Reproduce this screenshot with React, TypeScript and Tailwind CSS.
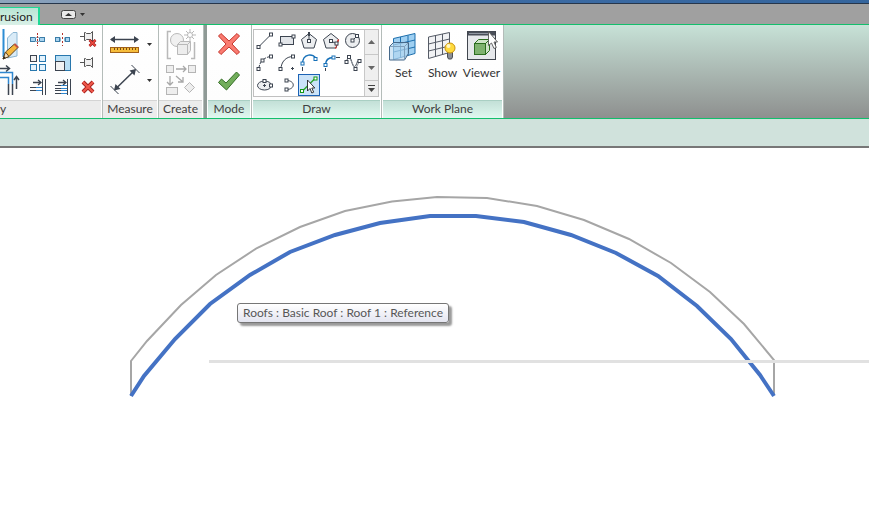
import React from 'react';

interface PanelProps {
  title: string;
  active?: boolean;
  align?: string;
  className: string;
  children: React.ReactNode;
}

const INK = '#3c4450';
const BLUE = '#2f86cf';

const Panel: React.FC<PanelProps> = ({ title, active = false, align = 'text-center', className, children }) => (
  <section className={`flex shrink-0 flex-col border-r border-[#b4bcb9] bg-white ${className}`}>
    <div className="flex h-[75px] bg-linear-to-b from-white to-[#fdfdfd]">{children}</div>
    <h2
      className={`mr-px h-[18px] overflow-hidden whitespace-nowrap border-t text-[12px] leading-4 text-[#404040] ${align} ${
        active
          ? 'ml-px border-[#a9cfc3] bg-linear-to-b from-[#c3e0d7] to-[#e0f8f0]'
          : 'border-[#d4d4d4] bg-[#ececec]'
      }`}
    >
      {title}
    </h2>
  </section>
);

interface ToolProps {
  label: string;
  className?: string;
  children: React.ReactNode;
}

const Tool: React.FC<ToolProps> = ({ label, className = '', children }) => (
  <button type="button" aria-label={label} className={`flex shrink-0 items-center justify-center ${className}`}>
    {children}
  </button>
);

// Small square grip used on the sketch icons
const Node: React.FC<{ x: number; y: number; color?: string }> = ({ x, y, color = INK }) => (
  <rect x={x - 1.5} y={y - 1.5} width="3" height="3" fill="#fff" stroke={color} />
);

const modifyTools = [
  {
    label: 'Split Element',
    icon: (
      <>
        <rect x="5.5" y="9.5" width="5" height="4" fill="#a8d3ef" stroke="#3b7da8" />
        <rect x="14.5" y="9.5" width="5" height="4" fill="#a8d3ef" stroke="#3b7da8" />
        <path d="M10 9.5h5M10 13.5h5" stroke="#8fb4cb" />
        <path d="M12.500 5v13" stroke="#b5342c" strokeDasharray="2 1" />
      </>
    ),
  },
  {
    label: 'Split with Gap',
    icon: (
      <>
        <rect x="5.5" y="9.5" width="4" height="4" fill="#a8d3ef" stroke="#3b7da8" />
        <rect x="15.5" y="9.5" width="4" height="4" fill="#a8d3ef" stroke="#3b7da8" />
        <path d="M10.5 9.5v4M14.500 9.5v4" stroke="#8fb4cb" />
        <path d="M12.500 5v13" stroke="#b5342c" strokeDasharray="2 2" />
      </>
    ),
  },
  {
    label: 'Unpin',
    icon: (
      <>
        <path d="M5 8.5h4" stroke="#555" />
        <path d="M9.500 4.500h1l1 1h4l2-2v10l-2-2h-4l-1 1h-1z" fill="#f0f0f0" stroke="#555" />
        <path d="m14.500 12 6 6M20.500 12l-6 6" stroke="#a11818" strokeWidth="2.600" />
        <path d="m14.500 12 6 6M20.500 12l-6 6" stroke="#ef4d42" strokeWidth="1.200" />
      </>
    ),
  },
  {
    label: 'Array',
    icon: (
      <>
        <rect x="5.5" y="3.5" width="6" height="6" fill="#f2f2f2" stroke={INK} />
        <g fill="#e4f3fd" stroke="#2877ad">
          <rect x="14.5" y="3.5" width="6" height="6" />
          <rect x="5.5" y="12.5" width="6" height="6" />
          <rect x="14.5" y="12.5" width="6" height="6" />
        </g>
      </>
    ),
  },
  {
    label: 'Scale',
    icon: (
      <>
        <rect x="5.500" y="3.500" width="15" height="15" fill="#b9dff5" stroke="#2877ad" />
        <rect x="5.500" y="9.500" width="9" height="9" fill="#f2f2f2" stroke={INK} />
      </>
    ),
  },
  {
    label: 'Pin',
    icon: (
      <>
        <path d="M5 10.500h4" stroke="#555" />
        <path d="M9.500 6.500h1l1 1h4l2-2v10l-2-2h-4l-1 1h-1z" fill="#f0f0f0" stroke="#555" />
      </>
    ),
  },
  {
    label: 'Trim Single',
    icon: (
      <>
        <path d="M5 11.500h6M5 14.500h6" stroke={INK} />
        <path d="M11 11.500h7M11 14.500h7" stroke={BLUE} />
        <path d="M17.500 3v16M20.500 3v16" stroke={INK} />
        <path d="M8 6.500h8m-3-2.500 3 2.500-3 2.500" fill="none" stroke={INK} strokeWidth="1.300" />
      </>
    ),
  },
  {
    label: 'Trim Multiple',
    icon: (
      <>
        <path d="M5 9.500h6M5 12.500h6M5 14.500h6M5 17.500h6" stroke={INK} />
        <path d="M11 9.500h7M11 12.500h7M11 14.500h7M11 17.500h7" stroke={BLUE} />
        <path d="M17.500 3v16M20.500 3v16" stroke={INK} />
        <path d="M8 6.500h8m-3-2.500 3 2.500-3 2.500" fill="none" stroke={INK} strokeWidth="1.300" />
      </>
    ),
  },
  {
    label: 'Delete',
    icon: (
      <>
        <path d="m8 6 10 10M18 6 8 16" stroke="#a5201d" strokeWidth="4" />
        <path d="m8 6 10 10M18 6 8 16" stroke="#f0594c" strokeWidth="2.200" />
      </>
    ),
  },
];

const drawTools = [
  {
    label: 'Line',
    icon: (
      <>
        <path d="M4.500 17 17 4.500" stroke={INK} />
        <Node x={4.5} y={17} />
        <Node x={17} y={4.5} />
      </>
    ),
  },
  {
    label: 'Rectangle',
    icon: (
      <>
        <rect x="4.500" y="6.500" width="13" height="8" fill="#e2e5e9" stroke={INK} />
        <Node x={4.5} y={14.5} />
        <Node x={17.5} y={6.5} />
      </>
    ),
  },
  {
    label: 'Inscribed Polygon',
    icon: (
      <>
        <path d="m11 3.500 7.500 6-2.500 8.500H6L3.500 9.500z" fill="#eceef0" stroke={INK} />
        <path d="M11 4v7" stroke={INK} />
        <Node x={11} y={11} />
        <path d="M11 2v4" stroke={INK} strokeWidth="2" />
      </>
    ),
  },
  {
    label: 'Circumscribed Polygon',
    icon: (
      <>
        <path d="m11 3.500 7.500 6-2.500 8.500H6L3.500 9.500z" fill="#eceef0" stroke={INK} />
        <path d="m18.500 9.500-3 9" stroke="#e3342b" strokeWidth="1.500" strokeDasharray="3 1" />
        <path d="m11 11 6 3" stroke={INK} />
        <Node x={11} y={11} />
        <Node x={16.5} y={13.5} />
      </>
    ),
  },
  {
    label: 'Circle',
    icon: (
      <>
        <circle cx="10.500" cy="10.500" r="7" fill="#eceef0" stroke={INK} />
        <path d="m10.500 10.500 4-4" stroke={INK} />
        <Node x={10.5} y={10.5} />
        <Node x={15} y={6} />
      </>
    ),
  },
  {
    label: 'Start-End-Radius Arc',
    icon: (
      <>
        <path d="M5 17c0-8 6-12 12-12.500" fill="none" stroke={INK} strokeDasharray="4 1" />
        <Node x={4.5} y={17} />
        <Node x={8.5} y={8.5} />
        <Node x={17} y={4.5} />
      </>
    ),
  },
  {
    label: 'Center-ends Arc',
    icon: (
      <>
        <path d="M5 17C5 10 10 4.500 17 4.500" fill="none" stroke={INK} />
        <path d="M16.500 15v3M15 16.500h3" stroke={INK} />
        <Node x={4.5} y={17} />
        <Node x={17} y={4.5} />
      </>
    ),
  },
  {
    label: 'Tangent End Arc',
    icon: (
      <>
        <path d="M4.500 15v4" stroke={INK} />
        <path d="M4.500 12C4.500 1 16 1 18 7" fill="none" stroke="#1670b8" strokeWidth="1.400" />
        <Node x={4.5} y={11.5} color="#1670b8" />
        <Node x={17.5} y={7} color="#1670b8" />
      </>
    ),
  },
  {
    label: 'Fillet Arc',
    icon: (
      <>
        <path d="M5.500 16v3M16 5.500h4" stroke={INK} />
        <path d="M5.500 13c0-5 3-7.500 8-7.500" fill="none" stroke="#1670b8" strokeWidth="1.400" />
        <Node x={5.5} y={13} color="#1670b8" />
        <Node x={13.5} y={5.5} color="#1670b8" />
      </>
    ),
  },
  {
    label: 'Spline',
    icon: (
      <>
        <path d="M4.500 10C6 3 8.500 5 9.500 9s2.500 8 4.500 4 1-5 3.500-4" fill="none" stroke={INK} />
        <path d="m7 5 6.500 12 4-8" fill="none" stroke="#8b9199" />
        <Node x={4.5} y={10} />
        <Node x={7} y={5} />
        <Node x={13.5} y={17} />
        <Node x={17.5} y={9} />
      </>
    ),
  },
  {
    label: 'Ellipse',
    icon: (
      <>
        <ellipse cx="10.500" cy="11.500" rx="7" ry="4.500" fill="#eceef0" stroke={INK} />
        <path d="M10.500 10v3M9 11.500h3" stroke={INK} />
        <Node x={10.5} y={7} />
        <Node x={17} y={11.5} />
      </>
    ),
  },
  {
    label: 'Partial Ellipse',
    icon: (
      <>
        <path d="M10.500 6.500c9 0 9 9 0 9" fill="none" stroke={INK} />
        <Node x={10.5} y={6.5} />
        <Node x={10.5} y={15.5} />
      </>
    ),
  },
  {
    label: 'Pick Lines',
    selected: true,
    icon: (
      <>
        <path d="M4 17.500 17 4.500" stroke="#2ba52b" strokeWidth="1.500" />
        <Node x={4} y={17} color="#159a15" />
        <Node x={17.5} y={4.5} color="#159a15" />
        <path d="M9.500 6v11l2.500-2.500 1.800 4.500 1.900-.8-1.900-4.200h3z" fill="#fff" stroke="#222" strokeWidth=".9" />
      </>
    ),
  },
];

const SetIcon = () => (
  <svg width="30" height="32" viewBox="1 -1 30 32" fill="none">
    <path d="M5.500 7.500 27 2.500v20l-21.500 6z" fill="#9fd0f2" stroke="#1d6fad" />
    <path d="m12.500 6v20.500M20 4.500v20M5.500 14 27 9M5.500 21 27 16" stroke="#1d6fad" />
    <path d="m1.500 15.500 4-4h15v11l-4 6.500h-15z" fill="#b8d8f0" fillOpacity=".65" stroke="#46698a" />
    <path d="M1.500 15.500h15v13m0-13 4-4" stroke="#7e9fbb" />
  </svg>
);

const ShowIcon = () => (
  <svg width="30" height="32" viewBox="1 0 30 32" fill="none">
    <path d="M1.500 7 22.500 2.500v20l-21 6z" fill="#f1f2f4" stroke="#555b66" />
    <path d="M8.500 5.500v21M15.500 4v20.500M1.500 14l21-5M1.500 21l21-5" stroke="#555b66" />
    <path d="M20.500 22h5v5l-1 2h-3l-1-2z" fill="#8b8f96" stroke="#4d5055" />
    <circle cx="23" cy="18" r="5" fill="#ffda3d" stroke="#c99412" />
    <circle cx="21.500" cy="16" r="2" fill="#fff7c4" />
  </svg>
);

const ViewerIcon = () => (
  <svg width="32" height="32" viewBox="0 0 32 32" fill="none">
    <rect x="1.500" y="1.500" width="28" height="28" fill="#e6e8eb" stroke="#41464e" />
    <path d="M2 3.500h27" stroke="#4a4f59" strokeWidth="4" />
    <path d="M3 3.500h20" stroke="#9096a0" />
    <path d="m8.500 13.500 4-4h11v11l-4 4h-11z" fill="#cfe5c8" stroke="#2c6e1f" />
    <rect x="8.500" y="13.500" width="11" height="11" fill="#7fb26f" stroke="#2c6e1f" />
    <path d="m19.500 13.500 4-4" stroke="#2c6e1f" />
    <path d="M22.500 1.500v14l3-2.500 2.500 5.500 2.300-1-2.300-5.500h3.500z" fill="#fff" stroke="#555" strokeWidth=".9" />
  </svg>
);

const planeTools = [
  { label: 'Set', icon: <SetIcon /> },
  { label: 'Show', icon: <ShowIcon /> },
  { label: 'Viewer', icon: <ViewerIcon /> },
];

const DownArrow = () => (
  <svg width="5" height="3" viewBox="0 0 5 3">
    <path d="M0 0h5L2.500 3z" fill="#333" />
  </svg>
);

const Ribbon = () => (
  <div className="flex h-[93px] bg-linear-to-b from-[#c7e2d7] to-[#8e908f]">
    <Panel title="y" align="text-left" className="w-[103px]">
      <div className="flex w-[25px] flex-col pt-[3px]">
        <Tool label="Mirror - Draw Axis">
          <svg width="25" height="36" viewBox="0 0 25 36" fill="none">
            <path d="M7.500 10 13 4.500h4V28l-9.500 2z" fill="#d9ebf7" stroke="#8bb6d3" />
            <path d="M3.500 1v28" stroke="#2d8dd4" strokeWidth="2" />
            <path d="m3 31 2.500-7L14.500 16l3.500 3.500-9 9z" fill="#f5b73d" stroke="#5f4420" />
            <path d="m3 31 2.500-7 3.500 4.500z" fill="#f3dfbc" stroke="#5f4420" />
            <path d="m3 31 1-3 1.500 2z" fill="#222" />
            <path d="m14.500 16 3.500 3.500" stroke="#c35143" strokeWidth="2" />
          </svg>
        </Tool>
        <Tool label="Trim/Extend to Corner">
          <svg width="25" height="36" viewBox="0 0 25 36" fill="none">
            <path d="M0 4.500h9M6 1.500l3.500 3L6 7.500" stroke={INK} strokeWidth="1.500" />
            <path d="M0 8.500h12.500V20M0 13.500h8.500V20" stroke={BLUE} strokeWidth="1.500" />
            <path d="M8.500 20v11M12.500 20v11" stroke={INK} strokeWidth="1.500" />
            <path d="M16.500 25V12.500M14 16l2.500-3.500L19 16" stroke={INK} strokeWidth="1.500" />
          </svg>
        </Tool>
      </div>
      <div className="grid grid-cols-3 content-start pt-[3px]">
        {modifyTools.map((tool) => (
          <Tool key={tool.label} label={tool.label} className="h-6 w-[25px]">
            <svg width="25" height="24" viewBox="0 0 25 24" fill="none">
              {tool.icon}
            </svg>
          </Tool>
        ))}
      </div>
    </Panel>

    <Panel title="Measure" className="w-[56px]">
      <div className="flex flex-col pl-[6px] pt-px">
        <Tool label="Measure" className="h-9 gap-[6px]">
          <svg width="32" height="32" viewBox="0 0 32 32" fill="none">
            <path d="M2 11.500h27" stroke={INK} strokeWidth="1.500" />
            <path d="m1 11.500 5-3.500v7zM30 11.500l-5-3.500v7z" fill={INK} />
            <rect x="1.500" y="19.500" width="28" height="5" fill="#f6bd3b" stroke="#a0601a" />
            <path d="M5.500 20v2M8.500 20v2M11.500 20v2M14.500 20v2M17.500 20v2M20.500 20v2M23.500 20v2M26.500 20v2" stroke="#7a4a14" />
          </svg>
          <DownArrow />
        </Tool>
        <Tool label="Aligned Dimension" className="h-9 gap-[6px]">
          <svg width="32" height="32" viewBox="0 0 32 32" fill="none">
            <path d="m1.500 22 8 8M22.500 1l8 8" stroke={INK} />
            <path d="M6 25.500 26 6" stroke={INK} strokeWidth="1.500" />
            <path d="m5 26.500 1.500-6.500 5 5zM27 5l-6.500 1.500 5 5z" fill={INK} />
          </svg>
          <DownArrow />
        </Tool>
      </div>
    </Panel>

    <Panel title="Create" className="w-[45px]">
      <div className="flex flex-1 flex-col items-center gap-px pt-[3px]">
        <Tool label="Create Group">
          <svg width="32" height="34" viewBox="0 0 32 34" fill="none" stroke="#b9b9b9">
            <path d="M6 3.500H2.500v27H6M26 30.500h3.500V14" strokeWidth="1.500" />
            <circle cx="12" cy="12" r="6.500" fill="#f0f0f0" />
            <path d="m12.500 16.500 3-3h10v9l-3 4h-10z" fill="#ededed" />
            <path d="M12.500 16.500h10v10m0-10 3-3" />
            <path d="M25 1v12M19 7h12M21 3l8 8M29 3l-8 8" />
            <circle cx="25" cy="7" r="2.500" fill="#fff" />
          </svg>
        </Tool>
        <Tool label="Create Similar">
          <svg width="32" height="34" viewBox="0 0 32 34" fill="none" stroke="#b5b5b5">
            <g fill="#eee">
              <rect x="1.500" y="2.500" width="7" height="7" />
              <rect x="23.500" y="2.500" width="7" height="7" />
              <rect x="1.500" y="24.500" width="11" height="7" />
              <path d="m24.500 19.500 5 5-5 5-5-5z" />
            </g>
            <path d="M11 6h10m-3-3 3 3-3 3M5 13v9m-3-3 3 3 3-3M11 13l7 6m0-5v5h-5" strokeWidth="1.300" stroke="#a8a8a8" />
          </svg>
        </Tool>
      </div>
    </Panel>

    <div className="w-[3px] shrink-0 bg-[#8f9a96]" />

    <Panel title="Mode" active className="w-[45px]">
      <div className="flex flex-1 flex-col items-center">
        <Tool label="Cancel Edit Mode" className="h-[38px]">
          <svg width="24" height="24" viewBox="0 0 24 24">
            <path
              d="M1.500 4 4 1.500 12 9l8-7.500L22.500 4 15 12l7.500 8-2.500 2.500L12 15l-8 7.500L1.500 20 9 12z"
              fill="#fa7b70"
              stroke="#c5362d"
            />
          </svg>
        </Tool>
        <Tool label="Finish Edit Mode" className="h-9">
          <svg width="24" height="24" viewBox="0 0 24 24">
            <path d="m1.500 13.500 3-3.500 4.500 4L19.500 3l3 3L9.500 21z" fill="#72ad5b" stroke="#356f26" />
          </svg>
        </Tool>
      </div>
    </Panel>

    <Panel title="Draw" active className="w-[130px]">
      <div className="ml-px mt-[4px] flex h-[68px] border border-[#c0c0c0] bg-white">
        <div className="grid grid-cols-5 content-start">
          {drawTools.map((tool) => (
            <Tool
              key={tool.label}
              label={tool.label}
              className={tool.selected ? 'bg-[#cbe3f8] outline outline-[#1b62b5] -outline-offset-1' : ''}
            >
              <svg width="22" height="22" viewBox="0 0 22 22" fill="none">
                {tool.icon}
              </svg>
            </Tool>
          ))}
        </div>
        <div className="flex w-[14px] flex-col divide-y divide-[#c8c8c8] border-l border-[#c8c8c8] bg-[#efefef]">
          <Tool label="Scroll up" className="h-[25px]">
            <svg width="7" height="4" viewBox="0 0 7 4">
              <path d="M0 4h7L3.500 0z" fill="#666" />
            </svg>
          </Tool>
          <Tool label="Scroll down" className="h-[26px]">
            <svg width="7" height="4" viewBox="0 0 7 4">
              <path d="M0 0h7L3.500 4z" fill="#666" />
            </svg>
          </Tool>
          <Tool label="More draw tools" className="h-[15px]">
            <svg width="7" height="7" viewBox="0 0 7 7">
              <path d="M0 0h7v1H0zM0 3h7L3.500 7z" fill="#444" />
            </svg>
          </Tool>
        </div>
      </div>
    </Panel>

    <Panel title="Work Plane" active className="w-[122px]">
      <div className="grid flex-1 grid-cols-3 px-[2px] pt-[5px]">
        {planeTools.map((tool) => (
          <button key={tool.label} type="button" className="flex flex-col items-center text-[12px] leading-4 text-[#333]">
            {tool.icon}
            <span className="mt-[3px]">{tool.label}</span>
          </button>
        ))}
      </div>
    </Panel>
  </div>
);

const DrawingArea = () => (
  <main className="relative flex-1 overflow-hidden bg-white">
    <svg className="block h-[320px] w-full" fill="none" aria-label="Roof profile">
      <path
        d="M131 248v-35l16-20 34-36 35-30 41-27 43-21 45-16 47-9.500 45-4.500 50 1 50 8 47 14 45 19 42 24 39 29 34 32 30 36v35"
        stroke="#a6a6a6"
        strokeWidth="2"
      />
      <path
        d="M131 248l13-20 31-37 35-35 40-29 40-23 45-17 45-12 50-7h46l48 6 47 13 45 18 42 23 39 30 34 33 29 36 14 21"
        stroke="#4472c4"
        strokeWidth="4"
      />
      <line x1="209" y1="213.500" x2="100%" y2="213.500" stroke="#e1e1e1" strokeWidth="3" />
    </svg>
    <div
      role="tooltip"
      className="absolute left-[237px] top-[155px] whitespace-nowrap rounded-[3px] border border-[#767676] bg-linear-to-b from-white to-[#e4e5f0] px-[5px] text-[12px] leading-[18px] text-[#575757] shadow-[3px_3px_2px_rgba(0,0,0,0.4)]"
    >
      Roofs : Basic Roof : Roof 1 : Reference
    </div>
  </main>
);

const App: React.FC = () => {
  return (
    <div className="flex min-h-screen flex-col overflow-hidden bg-white font-[Lato,sans-serif]">
      <div className="h-1 border-b border-[#26364b] bg-linear-to-r from-[#8fa5bd] via-[#3d6ca5] to-[#34659d]" />
      <nav className="flex h-[21px] items-end border-b border-[#12bf6c] bg-[#a0a0a0]">
        <button
          type="button"
          className="-mb-px h-[18px] w-[40px] border-r-2 border-t border-[#20d996] bg-linear-to-b from-[#b9e5d5] to-[#d9f0e7] pr-[8px] text-right text-[12px] leading-[14px] text-[#222]"
        >
          rusion
        </button>
        <Tool label="Minimize ribbon" className="ml-[21px] h-[20px] gap-[4px]">
          <svg width="15" height="9" viewBox="0 0 15 9">
            <rect x=".5" y=".5" width="14" height="8" rx="2" fill="#e9e9e9" stroke="#444" />
            <path d="M4 6h7L7.500 3z" fill="#333" />
          </svg>
          <DownArrow />
        </Tool>
      </nav>
      <Ribbon />
      <div className="h-[30px] border-b-2 border-t border-b-[#777] border-t-[#12bf6c] bg-[#d0e2dc]" />
      <DrawingArea />
    </div>
  );
};

export default App;
